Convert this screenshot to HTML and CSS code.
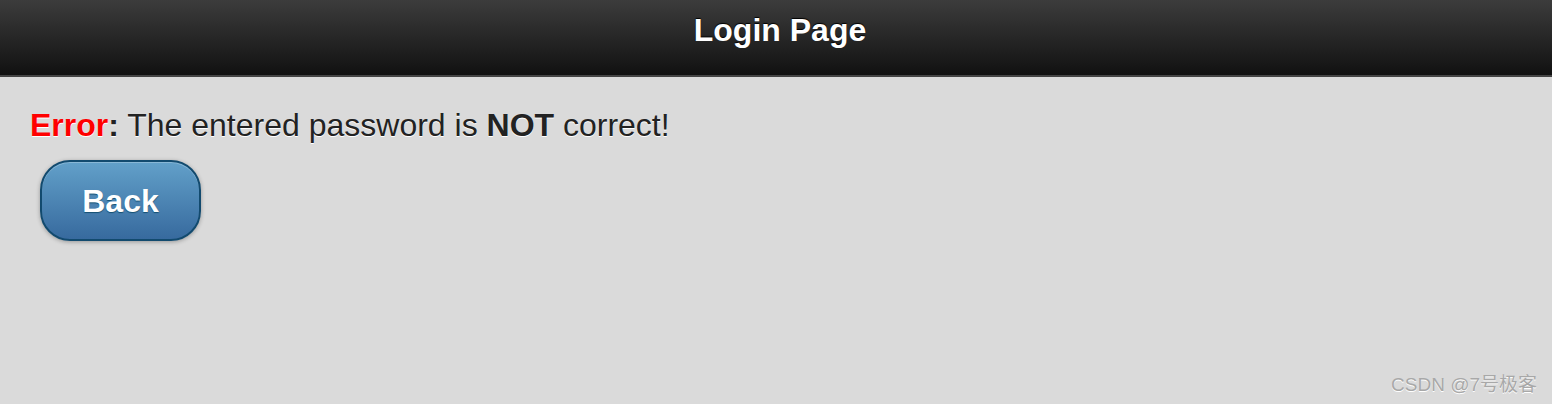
FILE: index.html
```html
<!DOCTYPE html>
<html>
<head>
<meta charset="utf-8">
<title>Login Page</title>
<link rel="stylesheet" href="styles.css">
</head>
<body>
<div class="page">
  <header class="header">
    <h1 class="title">Login Page</h1>
  </header>
  <main class="content">
    <p class="message"><span class="err">Error</span><b>:</b> The entered password is <b>NOT</b> correct!</p>
    <a class="btn" href="#">Back</a>
  </main>
  <div class="watermark">CSDN @7号极客</div>
</div>
</body>
</html>
```
FILE: styles.css
```css
html, body {
  margin: 0;
  padding: 0;
  height: 100%;
}
body {
  background: #dadada;
  font-family: "Liberation Sans", Arial, sans-serif;
  color: #222;
}
.page {
  position: relative;
  min-height: 404px;
  overflow: hidden;
}
.header {
  box-sizing: border-box;
  height: 77px;
  padding: 14px 0 0 8px;
  background: linear-gradient(#3c3c3c, #111);
  border-bottom: 2px solid #444;
  text-align: center;
}
.title {
  margin: 0;
  font-size: 32px;
  line-height: 32px;
  font-weight: bold;
  color: #fff;
  text-shadow: 0 -1px 1px #000;
}
.content {
  display: flex;
  flex-direction: column;
  align-items: flex-start;
  padding: 32px 29px 0 30px;
}
.message {
  margin: 0;
  font-size: 32px;
  line-height: 32px;
  text-shadow: 0 1px 0 #fff;
}
.err {
  color: #ff0000;
  font-weight: bold;
}
.btn {
  box-sizing: border-box;
  margin: 19px 0 0 10px;
  width: 161px;
  height: 81px;
  display: flex;
  align-items: center;
  justify-content: center;
  border: 2px solid #124a6e;
  border-radius: 30px;
  background: linear-gradient(#62a0c9, #376a9e);
  box-shadow: 0 1px 4px rgba(0,0,0,0.3), inset 0 1px 0 rgba(255,255,255,0.25);
  color: #fff;
  font-size: 32px;
  font-weight: bold;
  text-decoration: none;
  text-shadow: 0 1px 1px #145072;
  padding-top: 1px;
}
.watermark {
  position: absolute;
  right: 15px;
  bottom: 8px;
  font-family: "Liberation Sans", "Noto Sans CJK SC", sans-serif;
  font-size: 19px;
  color: #a8a8a8;
  text-shadow: 0 1px 0 #fff;
}
```
